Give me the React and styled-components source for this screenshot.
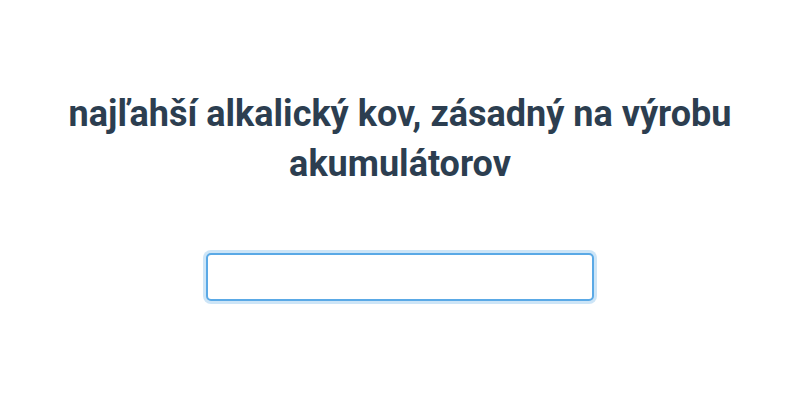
import React from "react";
import styled, { createGlobalStyle } from "styled-components";

const Global = createGlobalStyle`
  html, body { margin: 0; padding: 0; background: #ffffff; }
  body { font-family: Roboto, "Noto Sans", sans-serif; }
`;

const Page = styled.main`
  width: 800px;
  height: 400px;
  display: flex;
  flex-direction: column;
  align-items: center;
  padding-top: 89px;
  box-sizing: border-box;
`;

const Title = styled.h1`
  margin: 0;
  width: 720px;
  text-align: center;
  font-family: Roboto, "Noto Sans", sans-serif;
  font-weight: 700;
  font-size: 36px;
  line-height: 50px;
  color: #2c3e50;
`;

const Field = styled.input`
  margin-top: 64px;
  width: 388px;
  height: 48px;
  box-sizing: border-box;
  border: 2px solid #5aa9e6;
  border-radius: 5px;
  box-shadow: 0 0 0 3px rgba(90, 169, 230, 0.3);
  outline: none;
  padding: 0 12px;
  font-family: Roboto, sans-serif;
  font-size: 18px;
  color: #2c3e50;
  background: #fff;
`;

export default function App() {
  return (
    <>
      <Global />
      <Page>
        <Title>najľahší alkalický kov, zásadný na výrobu akumulátorov</Title>
        <Field type="text" aria-label="odpoveď" />
      </Page>
    </>
  );
}
